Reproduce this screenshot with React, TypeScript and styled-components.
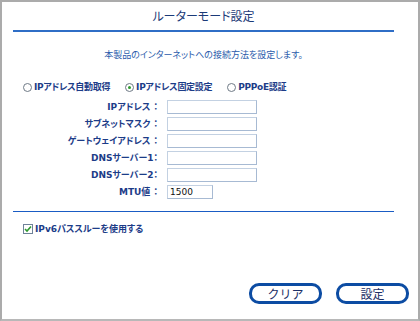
import React from 'react';
import styled, { createGlobalStyle } from 'styled-components';

const GlobalStyle = createGlobalStyle`
	html, body {
		margin: 0;
		padding: 0;
		background: #ffffff;
	}
	body {
		font-family: 'DejaVu Sans', 'Noto Sans CJK JP', sans-serif;
	}
`;

const fields = [
	{ label: 'IPアドレス ：', value: '', wide: true },
	{ label: 'サブネットマスク ：', value: '', wide: true },
	{ label: 'ゲートウェイアドレス ：', value: '', wide: true },
	{ label: 'DNSサーバー1：', value: '', wide: true },
	{ label: 'DNSサーバー2：', value: '', wide: true },
	{ label: 'MTU値 ：', value: '1500', wide: false },
];

const modes = [
	{ label: 'IPアドレス自動取得', checked: false },
	{ label: 'IPアドレス固定設定', checked: true },
	{ label: 'PPPoE認証', checked: false },
];

export default function App() {
	return (
		<>
			<GlobalStyle />
			<Frame>
				<Content>
					<Title>ルーターモード設定</Title>
					<Rule thick />
					<Lead>本製品のインターネットへの接続方法を設定します。</Lead>
					<Modes>
						{modes.map(m => (
							<Mode key={m.label}>
								<Radio checked={m.checked} />
								<ModeLabel>{m.label}</ModeLabel>
							</Mode>
						))}
					</Modes>
					<Form>
						{fields.map(f => (
							<React.Fragment key={f.label}>
								<FieldLabel>{f.label}</FieldLabel>
								<Field wide={f.wide}>{f.value}</Field>
							</React.Fragment>
						))}
					</Form>
					<Rule />
					<Check>
						<CheckBox>
							<svg width="8" height="8" viewBox="0 0 8 8">
								<path d="M1 4 L3 6 L7 1.5" fill="none" stroke="#2f9a2f" strokeWidth="1.6" />
							</svg>
						</CheckBox>
						<CheckLabel>IPv6パススルーを使用する</CheckLabel>
					</Check>
				</Content>
				<Buttons>
					<Button>クリア</Button>
					<Button>設定</Button>
				</Buttons>
			</Frame>
		</>
	);
}

const Frame = styled.div`
	box-sizing: border-box;
	width: 420px;
	height: 321px;
	border: 2px solid #ababab;
	border-bottom-color: #b8b8b8;
	display: flex;
	flex-direction: column;
	background: #fff;
`;

const Content = styled.div`
	margin: 0 24px 0 11px;
	display: flex;
	flex-direction: column;
`;

const Title = styled.div`
	height: 28px;
	line-height: 28px;
	text-align: center;
	font-family: 'Noto Sans CJK JP', sans-serif;
	font-size: 12px;
	color: #1b3a78;
	font-feature-settings: 'palt';
`;

const Rule = styled.div<{ thick?: boolean }>`
	flex: none;
	height: ${p => (p.thick ? 2 : 1)}px;
	background: ${p => (p.thick ? '#2f6ec6' : '#1a5cc4')};
`;

const Lead = styled.div`
	margin-top: 16px;
	height: 14px;
	text-align: center;
	font-family: 'Noto Sans CJK JP', sans-serif;
	font-size: 9px;
	line-height: 14px;
	color: #2a5bab;
	font-feature-settings: 'palt';
`;

const Modes = styled.div`
	margin-top: 18px;
	padding-left: 10px;
	display: flex;
	align-items: center;
	gap: 15px;
	height: 14px;
`;

const Mode = styled.div`
	display: flex;
	align-items: center;
	gap: 2px;
`;

const Radio = styled.span<{ checked?: boolean }>`
	box-sizing: border-box;
	width: 9px;
	height: 9px;
	border-radius: 50%;
	border: 1px solid #6f7a86;
	background: #fff;
	display: flex;
	align-items: center;
	justify-content: center;
	&::after {
		content: '';
		width: 3px;
		height: 3px;
		border-radius: 50%;
		background: ${p => (p.checked ? '#2e9a2e' : 'transparent')};
	}
`;

const ModeLabel = styled.span`
	font-family: 'DejaVu Sans', 'Noto Sans CJK JP', sans-serif;
	font-size: 9px;
	line-height: 14px;
	font-weight: bold;
	color: #1c3c88;
	font-feature-settings: 'palt';
	letter-spacing: -0.3px;
`;

const Form = styled.div`
	margin-top: 6px;
	margin-bottom: 12px;
	display: grid;
	grid-template-columns: 145px auto;
	grid-auto-rows: 14px;
	column-gap: 9px;
	row-gap: 3px;
	align-items: center;
`;

const FieldLabel = styled.div`
	text-align: right;
	font-family: 'DejaVu Sans', 'Noto Sans CJK JP', sans-serif;
	font-size: 9px;
	line-height: 14px;
	font-weight: bold;
	color: #1c3c88;
	font-feature-settings: 'palt';
	white-space: nowrap;
`;

const Field = styled.div<{ wide?: boolean }>`
	box-sizing: border-box;
	width: ${p => (p.wide ? 90 : 46)}px;
	height: 14px;
	border: 1px solid #a7bad3;
	border-top-color: #c3d1e2;
	border-left-color: #c3d1e2;
	padding-left: 2px;
	font-family: 'DejaVu Sans', sans-serif;
	font-size: 9px;
	line-height: 12px;
	color: #111;
`;

const Check = styled.div`
	margin-top: 12px;
	padding-left: 10px;
	display: flex;
	align-items: center;
	gap: 2px;
	height: 10px;
`;

const CheckBox = styled.span`
	box-sizing: border-box;
	width: 10px;
	height: 10px;
	border: 1px solid #6f8299;
	background: #fff;
	display: flex;
	align-items: center;
	justify-content: center;
`;

const CheckLabel = styled.span`
	font-family: 'DejaVu Sans', 'Noto Sans CJK JP', sans-serif;
	font-size: 9px;
	line-height: 14px;
	font-weight: bold;
	color: #1c3c88;
	font-feature-settings: 'palt';
`;

const Buttons = styled.div`
	margin-top: auto;
	margin-bottom: 15px;
	padding-right: 9px;
	display: flex;
	justify-content: flex-end;
	gap: 14px;
`;

const Button = styled.div`
	box-sizing: border-box;
	width: 73px;
	height: 21px;
	border: 3px solid #0c4ca3;
	border-radius: 10px;
	display: flex;
	align-items: center;
	justify-content: center;
	font-family: 'Noto Sans CJK JP', sans-serif;
	font-size: 12px;
	color: #1c2f66;
	background: #fff;
`;
